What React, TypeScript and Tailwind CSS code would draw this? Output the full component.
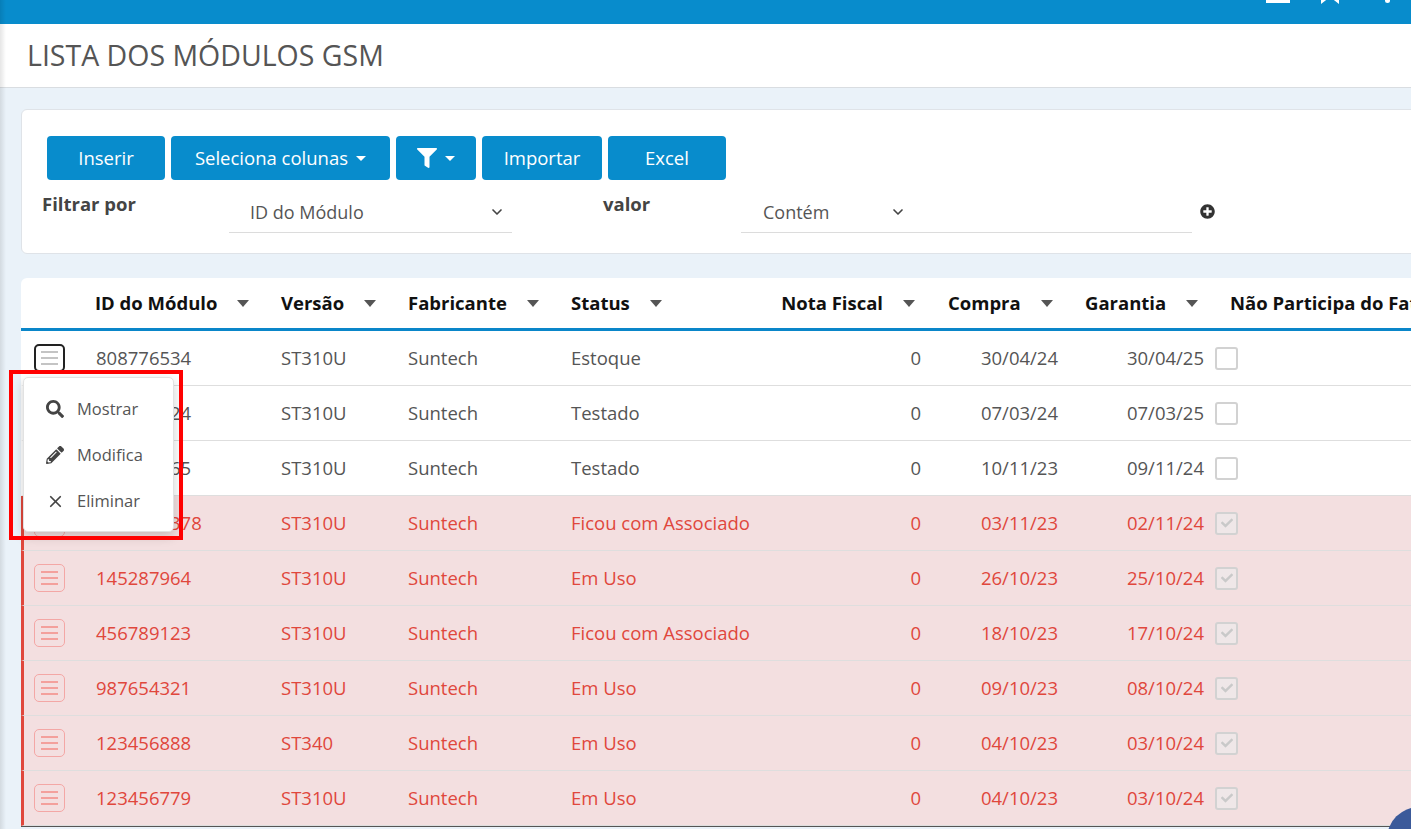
import { FaSearch, FaPencilAlt, FaFilter, FaPlusCircle, FaCheck } from 'react-icons/fa';
import { ChevronDown, X } from 'lucide-react';

type Row = {
  id: string;
  versao: string;
  fabricante: string;
  status: string;
  nota: string;
  compra: string;
  garantia: string;
  red: boolean;
};

const rows: Row[] = [
  { id: '808776534', versao: 'ST310U', fabricante: 'Suntech', status: 'Estoque', nota: '0', compra: '30/04/24', garantia: '30/04/25', red: false },
  { id: '354123424', versao: 'ST310U', fabricante: 'Suntech', status: 'Testado', nota: '0', compra: '07/03/24', garantia: '07/03/25', red: false },
  { id: '354123465', versao: 'ST310U', fabricante: 'Suntech', status: 'Testado', nota: '0', compra: '10/11/23', garantia: '09/11/24', red: false },
  { id: '1452871378', versao: 'ST310U', fabricante: 'Suntech', status: 'Ficou com Associado', nota: '0', compra: '03/11/23', garantia: '02/11/24', red: true },
  { id: '145287964', versao: 'ST310U', fabricante: 'Suntech', status: 'Em Uso', nota: '0', compra: '26/10/23', garantia: '25/10/24', red: true },
  { id: '456789123', versao: 'ST310U', fabricante: 'Suntech', status: 'Ficou com Associado', nota: '0', compra: '18/10/23', garantia: '17/10/24', red: true },
  { id: '987654321', versao: 'ST310U', fabricante: 'Suntech', status: 'Em Uso', nota: '0', compra: '09/10/23', garantia: '08/10/24', red: true },
  { id: '123456888', versao: 'ST340', fabricante: 'Suntech', status: 'Em Uso', nota: '0', compra: '04/10/23', garantia: '03/10/24', red: true },
  { id: '123456779', versao: 'ST310U', fabricante: 'Suntech', status: 'Em Uso', nota: '0', compra: '04/10/23', garantia: '03/10/24', red: true },
];

// header and body share the same columns; body rows carry a 3px left border, so their first column is 3px narrower
const headCols = 'grid grid-cols-[60px_185px_127px_163px_144px_235px_135px_142px_1fr]';
const bodyCols = 'grid grid-cols-[57px_185px_127px_163px_144px_235px_135px_142px_1fr]';

function SortCaret() {
  return (
    <svg width="12" height="7" viewBox="0 0 12 7" className="ml-5 shrink-0">
      <polygon points="0,0 12,0 6,7" fill="#555" />
    </svg>
  );
}

function WhiteCaret() {
  return (
    <svg width="10" height="5" viewBox="0 0 10 5" className="ml-2">
      <polygon points="0,0 10,0 5,5" fill="#fff" />
    </svg>
  );
}

function MenuButton({ red, focused }: { red: boolean; focused: boolean }) {
  const border = focused ? 'border-2 border-[#222]' : red ? 'border border-[#f3a7a5]' : 'border border-[#ccc]';
  const line = red ? 'bg-[#f3a09c]' : 'bg-[#c4c4c4]';
  return (
    <div className={`flex h-[28px] w-[31px] flex-col items-center justify-center gap-[4px] rounded-[5px] ${border}`}>
      <span className={`h-[2px] w-[17px] ${line}`} />
      <span className={`h-[2px] w-[17px] ${line}`} />
      <span className={`h-[2px] w-[17px] ${line}`} />
    </div>
  );
}

function Checkbox({ checked }: { checked: boolean }) {
  return (
    <div className={`flex h-[23px] w-[23px] items-center justify-center rounded-[3px] border-2 border-[#d2d2d2] ${checked ? 'bg-[#ececec]/60' : 'bg-white'}`}>
      {checked && <FaCheck size={12} className="text-[#c9c9c9]" />}
    </div>
  );
}

export default function App() {
  return (
    <div
      className="relative flex h-[829px] w-[1411px] flex-col overflow-hidden bg-[#eaf2f9] text-[#555]"
      style={{ fontFamily: '"Open Sans", "Noto Sans", sans-serif' }}
    >
      {/* top bar */}
      <div className="relative h-[24px] shrink-0 overflow-hidden bg-[#088ccc]">
        <div className="absolute left-[1266px] top-0 h-[3px] w-[24px] bg-white" />
        <svg className="absolute left-[1320px] top-[-12px]" width="20" height="16" viewBox="0 0 20 16">
          <path d="M1 0 H19 V16 L10 9 L1 16 Z" fill="#fff" />
        </svg>
        <div className="absolute left-[1385px] top-0 h-[3px] w-[5px] rounded-b bg-white" />
      </div>

      {/* title */}
      <div className="flex h-[64px] shrink-0 items-center border-b border-[#d9dde1] bg-white pl-[27px]">
        <h1 className="text-[28.5px] font-normal text-[#555]">LISTA DOS MÓDULOS GSM</h1>
      </div>

      <div className="pointer-events-none absolute inset-y-0 left-0 w-[6px] bg-gradient-to-r from-black/10 to-transparent" />

      <div className="flex flex-col pl-[21px] pt-[21px]">
        {/* filter card */}
        <div className="h-[145px] w-[1420px] rounded-[6px] border border-[#dfe3e8] bg-white pl-[25px] pt-[26px]">
          <div className="flex gap-[6px] text-[18.5px] text-white">
            <button className="h-[44px] w-[118px] rounded-[4px] bg-[#088ccc]">Inserir</button>
            <button className="flex h-[44px] w-[219px] items-center justify-center rounded-[4px] bg-[#088ccc]">
              Seleciona colunas
              <WhiteCaret />
            </button>
            <button className="flex h-[44px] w-[80px] items-center justify-center rounded-[4px] bg-[#088ccc]">
              <FaFilter size={20} />
              <WhiteCaret />
            </button>
            <button className="h-[44px] w-[120px] rounded-[4px] bg-[#088ccc]">Importar</button>
            <button className="h-[44px] w-[118px] rounded-[4px] bg-[#088ccc]">Excel</button>
          </div>
          <div className="mt-[10px] flex items-start">
            <span className="-ml-[5px] w-[187px] text-[18.5px] font-bold leading-[28px] text-[#444]">Filtrar por</span>
            <div className="flex h-[43px] w-[283px] items-center justify-between border-b border-[#dcdcdc] pl-[21px] pr-[7px] pt-[2px]">
              <span className="text-[18px] text-[#555]">ID do Módulo</span>
              <ChevronDown size={16} strokeWidth={2.5} className="text-[#444]" />
            </div>
            <span className="ml-[91px] w-[138px] text-[18.5px] font-bold leading-[28px] text-[#444]">valor</span>
            <div className="flex h-[43px] w-[451px] items-center border-b border-[#dcdcdc] pl-[22px] pt-[2px]">
              <span className="w-[127px] text-[18px] text-[#555]">Contém</span>
              <ChevronDown size={16} strokeWidth={2.5} className="text-[#444]" />
            </div>
            <div className="ml-[8px] flex h-[43px] items-center">
              <FaPlusCircle size={15} className="text-[#333]" />
            </div>
          </div>
        </div>

        {/* table */}
        <div className="relative mt-[24px] w-[1700px] rounded-t-[6px] border-b border-[#555] bg-white">
          <div className={`${headCols} h-[53px] items-center border-b-[3px] border-[#0a86c9] text-[18.5px] font-bold text-[#111]`}>
            <div />
            <div className="flex items-center pl-[14px]">ID do Módulo<SortCaret /></div>
            <div className="flex items-center pl-[15px]">Versão<SortCaret /></div>
            <div className="flex items-center pl-[15px]">Fabricante<SortCaret /></div>
            <div className="flex items-center pl-[15px]">Status<SortCaret /></div>
            <div className="flex items-center justify-end pr-[20px]">Nota Fiscal<SortCaret /></div>
            <div className="flex items-center pl-[13px]">Compra<SortCaret /></div>
            <div className="flex items-center pl-[15px]">Garantia<SortCaret /></div>
            <div className="whitespace-nowrap pl-[18px]">Não Participa do Faturamento</div>
          </div>

          {rows.map((r, i) => (
            <div
              key={r.id}
              className={`${bodyCols} h-[55px] items-center border-b border-l-[3px] border-b-[#dedede] text-[18.5px] ${
                r.red ? 'border-l-[#e0473c] bg-[#f3dfe0] text-[#e0473c]' : 'border-l-transparent bg-white text-[#555]'
              }`}
            >
              <div className="pl-[10px]">
                <MenuButton red={r.red} focused={i === 0} />
              </div>
              <div className="pl-[15px]">{r.id}</div>
              <div className="pl-[15px]">{r.versao}</div>
              <div className="pl-[15px]">{r.fabricante}</div>
              <div className="whitespace-nowrap pl-[15px]">{r.status}</div>
              <div className="pr-[14px] text-right">{r.nota}</div>
              <div className="pr-[12px] text-right">{r.compra}</div>
              <div className="pr-[8px] text-right">{r.garantia}</div>
              <div className="pl-[3px]">
                <Checkbox checked={r.red} />
              </div>
            </div>
          ))}

          {/* row action menu */}
          <div className="absolute left-[2px] top-[99px] z-10 flex w-[151px] flex-col rounded-[5px] border border-[#e2e2e2] bg-white pb-[7px] pt-[8px] shadow-[0_4px_12px_rgba(0,0,0,0.18)]">
            <div className="flex h-[46px] items-center gap-[13px] pl-[22px] text-[16.5px] text-[#555]">
              <FaSearch size={18} className="text-[#444]" />
              Mostrar
            </div>
            <div className="flex h-[46px] items-center gap-[13px] pl-[22px] text-[16.5px] text-[#555]">
              <FaPencilAlt size={18} className="text-[#444]" />
              Modifica
            </div>
            <div className="flex h-[46px] items-center gap-[12px] pl-[22px] text-[16.5px] text-[#555]">
              <X size={19} strokeWidth={2.2} className="text-[#444]" />
              Eliminar
            </div>
          </div>
        </div>
      </div>

      {/* annotation frame */}
      <div className="pointer-events-none absolute left-[9px] top-[370px] z-20 h-[170px] w-[174px] border-[4px] border-[#ff0000]" />

      {/* floating button */}
      <div className="absolute bottom-[-42px] right-[-40px] h-[64px] w-[64px] rounded-full bg-[#3b5a9a]" />
    </div>
  );
}
